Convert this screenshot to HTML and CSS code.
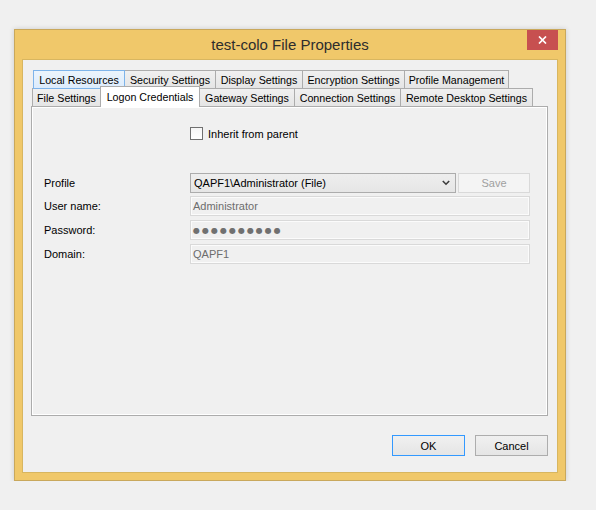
FILE: index.html
```html
<!DOCTYPE html>
<html>
<head>
<meta charset="utf-8">
<title>test-colo File Properties</title>
<link rel="stylesheet" href="styles.css">
</head>
<body>
<div class="window">
  <div class="titlebar">
    <span class="title">test-colo File Properties</span>
    <button class="close" aria-label="Close">
      <svg width="9" height="8" viewBox="0 0 9 8"><path d="M1 0.5 L8 7.5 M8 0.5 L1 7.5" stroke="#fff" stroke-width="1.7" fill="none"/></svg>
    </button>
  </div>
  <div class="client">
    <div class="tabs">
      <div class="tab-row back">
        <div class="tab hover w-local">Local Resources</div>
        <div class="tab w-security">Security Settings</div>
        <div class="tab w-display">Display Settings</div>
        <div class="tab w-encryption">Encryption Settings</div>
        <div class="tab w-profile">Profile Management</div>
      </div>
      <div class="tab-row front">
        <div class="tab w-file">File Settings</div>
        <div class="tab selected w-logon">Logon Credentials</div>
        <div class="tab w-gateway">Gateway Settings</div>
        <div class="tab w-connection">Connection Settings</div>
        <div class="tab w-remote">Remote Desktop Settings</div>
      </div>
    </div>
    <div class="panel">
      <label class="inherit"><span class="checkbox"></span><span>Inherit from parent</span></label>
      <div class="form">
        <span class="label">Profile</span>
        <div class="profile-row">
          <div class="combo">
            <span>QAPF1\Administrator (File)</span>
            <svg width="8" height="6" viewBox="0 0 8 6"><path d="M0.8 1 L4 4.2 L7.2 1" stroke="#3c3c3c" stroke-width="1.6" fill="none"/></svg>
          </div>
          <button class="save" disabled>Save</button>
        </div>
        <span class="label">User name:</span>
        <div class="textbox">Administrator</div>
        <span class="label">Password:</span>
        <div class="textbox password">●●●●●●●●●●</div>
        <span class="label">Domain:</span>
        <div class="textbox">QAPF1</div>
      </div>
    </div>
    <div class="buttons">
      <button class="btn default">OK</button>
      <button class="btn">Cancel</button>
    </div>
  </div>
</div>
</body>
</html>
```

FILE: styles.css
```css
html, body {
  margin: 0;
  background: #f0f0f0;
}
body {
  font-family: "Liberation Sans", Arial, sans-serif;
  font-size: 11px;
  color: #000;
}
.window {
  margin: 29px 0 0 14px;
  width: 552px;
  height: 452px;
  box-sizing: border-box;
  border: 1px solid #c9a85c;
  background: #f0c86a;
  padding: 0 7px 7px 7px;
  display: flex;
  flex-direction: column;
  box-shadow: 0 0 5px rgba(0, 0, 0, 0.16);
}
.titlebar {
  height: 29px;
  display: grid;
  grid-template-columns: 1fr auto 1fr;
  align-items: center;
}
.title {
  grid-column: 2;
  font-size: 15px;
  color: #2d2d2d;
  line-height: 29px;
}
.close {
  grid-column: 3;
  justify-self: end;
  align-self: start;
  width: 31px;
  height: 20px;
  margin: 0;
  padding: 0;
  border: none;
  background: #c75050;
  display: flex;
  align-items: center;
  justify-content: center;
}
.close svg { display: block; }
.client {
  flex: 1;
  background: #f0f0f0;
  border: 1px solid #d8b660;
  padding: 10px 9px 0 8px;
  display: flex;
  flex-direction: column;
}
.tabs {
  display: flex;
  flex-direction: column;
}
.tab-row {
  display: flex;
}
.tab-row.back {
  margin-left: 2px;
}
.tab-row.front {
  margin-left: 1px;
  margin-top: -1px;
}
.tab {
  box-sizing: border-box;
  height: 19px;
  border: 1px solid #acacac;
  background: linear-gradient(#f0f0f0, #e5e5e5);
  margin-left: -1px;
  display: flex;
  align-items: center;
  justify-content: center;
  white-space: nowrap;
  font-size: 10.7px;
}
.tab:first-child { margin-left: 0; }
.tab.hover {
  background: linear-gradient(#ecf4fc, #dcecfc);
  border-color: #7eb4ea;
  position: relative;
  z-index: 1;
}
.front .tab {
  height: 18px;
  border-bottom: none;
}
.front .tab.selected {
  height: 21px;
  margin-top: -2px;
  margin-bottom: -1px;
  background: #fff;
  position: relative;
  z-index: 2;
  padding-bottom: 1px;
}
.w-local { width: 92px; }
.w-security { width: 92px; }
.w-display { width: 88px; }
.w-encryption { width: 103px; }
.w-profile { width: 105px; }
.w-file { width: 69px; }
.w-logon { width: 100px; }
.w-gateway { width: 96px; }
.w-connection { width: 107px; }
.w-remote { width: 133px; }
.panel {
  box-sizing: border-box;
  height: 310px;
  border: 1px solid #acacac;
  box-shadow: inset 0 0 0 1px #fff;
  background: #f0f0f0;
  padding: 20px 12px 0 12px;
  display: flex;
  flex-direction: column;
}
.inherit {
  margin-left: 146px;
  display: flex;
  align-items: center;
  gap: 5px;
  height: 13px;
}
.checkbox {
  box-sizing: border-box;
  width: 13px;
  height: 13px;
  border: 1px solid #707070;
  background: linear-gradient(#f6f6f6, #ffffff);
}
.form {
  margin-top: 33px;
  display: grid;
  grid-template-columns: 146px 340px;
  grid-template-rows: 19px 20px 20px 20px;
  row-gap: 4px;
  align-items: center;
}
.label {
  color: #000;
}
.profile-row {
  display: flex;
  gap: 2px;
  height: 20px;
  align-self: start;
}
.combo {
  box-sizing: border-box;
  width: 266px;
  height: 20px;
  border: 1px solid #acacac;
  background: linear-gradient(#eeeeee, #e6e6e6);
  display: flex;
  align-items: center;
  justify-content: space-between;
  padding: 0 5px 0 3px;
}
.combo svg { display: block; }
.save {
  box-sizing: border-box;
  width: 72px;
  height: 20px;
  margin: 0;
  padding: 0;
  border: 1px solid #d9d9d9;
  background: #f4f4f4;
  color: #a0a0a0;
  font-family: inherit;
  font-size: 11px;
}
.textbox {
  box-sizing: border-box;
  height: 20px;
  border: 1px solid #d9d9d9;
  box-shadow: inset 0 0 0 1px #fbfbfb;
  background: #f0f0f0;
  color: #6d6d6d;
  display: flex;
  align-items: center;
  padding-left: 2px;
}
.textbox.password {
  font-family: "DejaVu Sans", sans-serif;
  font-size: 8px;
  letter-spacing: 2px;
  color: #707070;
}
.buttons {
  margin-top: 19px;
  display: flex;
  justify-content: flex-end;
  gap: 10px;
}
.btn {
  box-sizing: border-box;
  width: 73px;
  height: 21px;
  margin: 0;
  padding: 0;
  border: 1px solid #adadad;
  background: linear-gradient(#f0f0f0, #e5e5e5);
  color: #000;
  font-family: inherit;
  font-size: 11px;
}
.btn.default {
  border-color: #3399ff;
}
```
